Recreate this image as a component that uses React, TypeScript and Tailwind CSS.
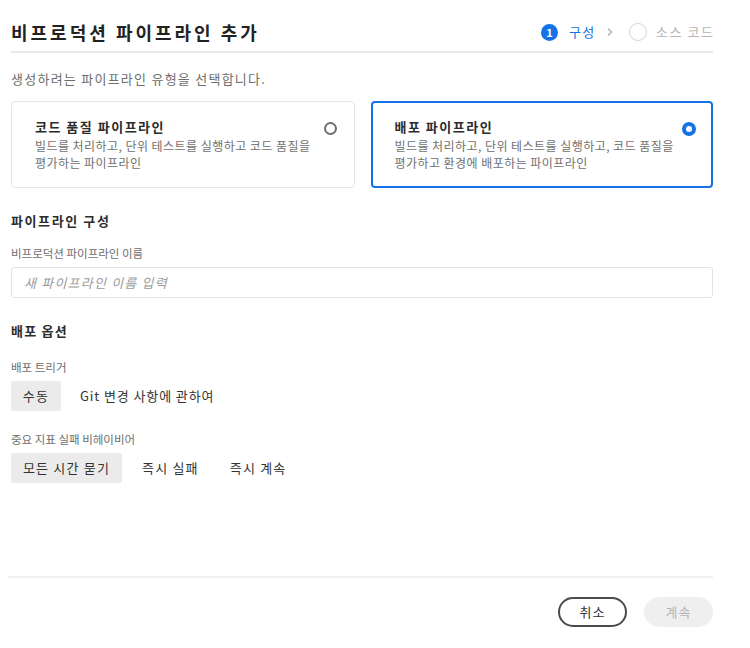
import React from "react";

export default function App() {
  const font = { fontFamily: '"Noto Sans CJK KR", "Noto Sans", sans-serif' };
  return (
    <div className="w-[750px] h-[648px] bg-white text-[#2c2c2c]" style={font}>
      <div className="pl-[11px] pr-[37px] pt-[18px] flex flex-col">
        <div className="flex items-center justify-between h-[28px]">
          <div className="text-[18px] font-bold text-[#222] leading-none tracking-[3px]">비프로덕션 파이프라인 추가</div>
          <div className="flex items-center text-[13px]">
            <div className="w-[17px] h-[17px] rounded-full bg-[#1473e6] text-white text-[11px] font-bold flex items-center justify-center">1</div>
            <span className="ml-[11px] text-[#1473e6] tracking-[1.5px]">구성</span>
            <svg className="ml-[10px]" width="8" height="10" viewBox="0 0 8 10"><path d="M2 1.5 L5.5 5 L2 8.5" stroke="#b0b0b0" strokeWidth="1.4" fill="none" /></svg>
            <div className="ml-[15px] w-[18px] h-[18px] rounded-full border-[1.5px] border-[#d5d5d5]" />
            <span className="ml-[9px] text-[#b5b5b5] tracking-[1.6px] mr-[-1.6px]">소스 코드</span>
          </div>
        </div>
        <div className="mt-[5px] h-[2px] bg-[#e8e8e8]" />
        <div className="mt-[17px] text-[13px] text-[#6e6e6e] leading-[18px] tracking-[1.25px]">생성하려는 파이프라인 유형을 선택합니다.</div>
        <div className="mt-[13px] flex gap-[16px] h-[87px]">
          <div className="flex-1 rounded-[4px] border border-[#e6e6e6] pl-[23px] pr-[17px] pt-[16px] flex justify-between">
            <div>
              <div className="text-[13px] font-bold text-[#2c2c2c] leading-[18px] tracking-[1.5px]">코드 품질 파이프라인</div>
              <div className="text-[12px] text-[#707070] leading-[17px] mt-[1px] tracking-[0.45px]">빌드를 처리하고, 단위 테스트를 실행하고 코드 품질을<br />평가하는 파이프라인</div>
            </div>
            <div className="mt-[4px] w-[13px] h-[13px] rounded-full border-2 border-[#6e6e6e]" />
          </div>
          <div className="flex-1 rounded-[4px] border-2 border-[#1473e6] pl-[22px] pr-[15px] pt-[15px] flex justify-between">
            <div>
              <div className="text-[13px] font-bold text-[#2c2c2c] leading-[18px] tracking-[1.5px]">배포 파이프라인</div>
              <div className="text-[12px] text-[#707070] leading-[17px] mt-[1px] tracking-[0.45px]">빌드를 처리하고, 단위 테스트를 실행하고, 코드 품질을<br />평가하고 환경에 배포하는 파이프라인</div>
            </div>
            <div className="mt-[4px] w-[14px] h-[14px] rounded-full border-[4px] border-[#1473e6] bg-white" />
          </div>
        </div>
        <div className="mt-[24px] text-[13px] font-bold text-[#2c2c2c] leading-[18px] tracking-[1.6px]">파이프라인 구성</div>
        <div className="mt-[15px] text-[11.5px] text-[#6e6e6e] leading-[17px]">비프로덕션 파이프라인 이름</div>
        <div className="mt-[5px] h-[31px] rounded-[3px] border border-[#e3e3e3] flex items-center px-[12px]">
          <span className="text-[13px] italic text-[#9a9a9a] tracking-[1.2px]">새 파이프라인 이름 입력</span>
        </div>
        <div className="mt-[24px] text-[13px] font-bold text-[#2c2c2c] leading-[18px] tracking-[1.2px]">배포 옵션</div>
        <div className="mt-[19px] text-[11.5px] text-[#6e6e6e] leading-[17px]">배포 트리거</div>
        <div className="mt-[5px] flex items-center gap-[10px] text-[13px] text-[#333]">
          <div className="h-[30px] w-[50px] rounded-[3px] bg-[#ebebeb] flex items-center justify-center tracking-[1.2px]">수동</div>
          <div className="h-[30px] px-[9px] flex items-center tracking-[0.9px]">Git 변경 사항에 관하여</div>
        </div>
        <div className="mt-[20px] text-[11.5px] text-[#6e6e6e] leading-[17px]">중요 지표 실패 비헤이비어</div>
        <div className="mt-[5px] flex items-center text-[13px] text-[#333]">
          <div className="h-[30px] w-[111px] rounded-[3px] bg-[#ebebeb] flex items-center justify-center tracking-[1.2px]">모든 시간 묻기</div>
          <div className="ml-[20px] h-[30px] flex items-center tracking-[1.2px]">즉시 실패</div>
          <div className="ml-[31px] h-[30px] flex items-center tracking-[1.2px]">즉시 계속</div>
        </div>
        <div className="mt-[93px] ml-[-3px] h-[2px] bg-[#f0f0f0]" />
        <div className="mt-[19px] flex justify-end gap-[17px] text-[13px]">
          <div className="h-[30px] w-[69px] rounded-full border-2 border-[#4b4b4b] flex items-center justify-center text-[#333] tracking-[1px]">취소</div>
          <div className="h-[30px] w-[69px] rounded-full bg-[#efefef] flex items-center justify-center text-[#b5b5b5] tracking-[1px]">계속</div>
        </div>
      </div>
    </div>
  );
}
